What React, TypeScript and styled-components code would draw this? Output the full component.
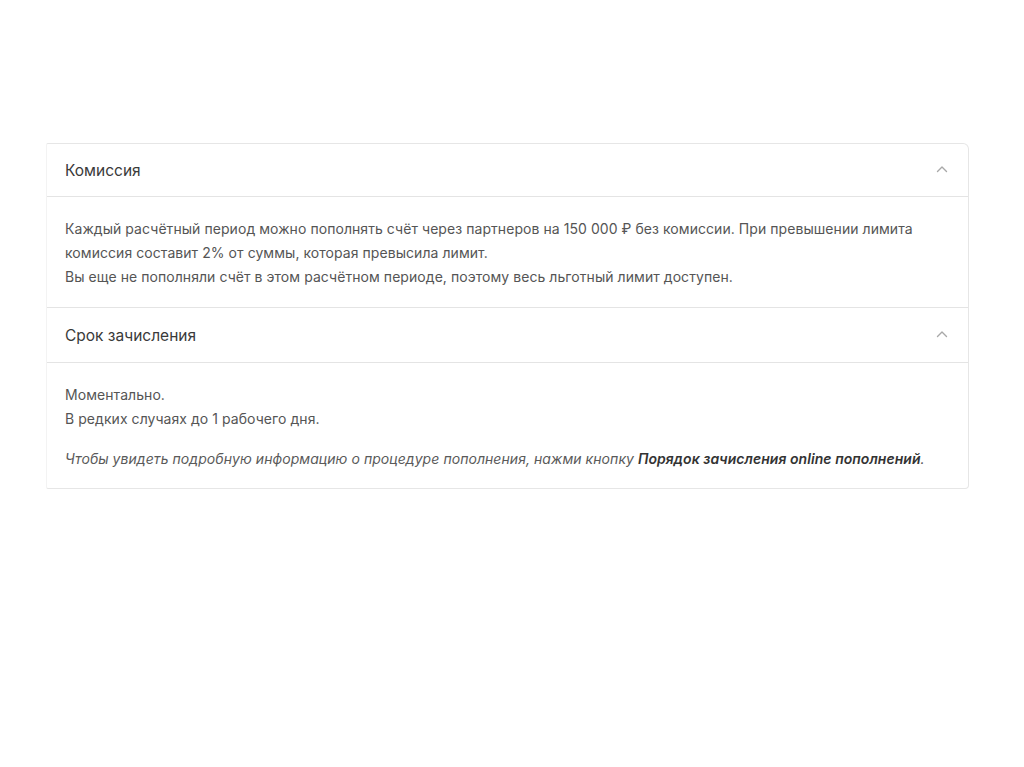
import styled, { createGlobalStyle } from "styled-components";

const GlobalStyle = createGlobalStyle`
  html, body {
    margin: 0;
    padding: 0;
    background: #fff;
  }
  body {
    font-family: Inter, "Noto Sans", "Liberation Sans", sans-serif;
    -webkit-font-smoothing: antialiased;
  }
`;

const Page = styled.div`
  width: 1024px;
  height: 767px;
  padding: 143px 0 0 46px;
  box-sizing: border-box;
  background: #fff;
`;

const Card = styled.div`
  width: 923px;
  box-sizing: border-box;
  border: 1px solid #e6e6e6;
  border-left-color: #f3f3f3;
  border-radius: 2px 6px 4px 2px;
  background: #fff;
`;

const Section = styled.div<{ $last?: boolean }>`
  border-bottom: ${(p) => (p.$last ? "none" : "1px solid #e4e4e4")};
`;

const Header = styled.div<{ $h: number }>`
  height: ${(p) => p.$h}px;
  display: flex;
  align-items: center;
  justify-content: space-between;
  padding: 0 18px;
  border-bottom: 1px solid #e4e4e4;
`;

const Title = styled.span`
  font-size: 15.5px;
  color: #3a3a3a;
`;

const Chevron = styled.svg`
  width: 12px;
  height: 8px;
  margin-right: 2px;
  margin-top: -3px;
`;

const Body = styled.div<{ $pt: number; $pb: number }>`
  padding: ${(p) => p.$pt}px 18px ${(p) => p.$pb}px;
`;

const Line = styled.p<{ $gap?: number }>`
  margin: ${(p) => p.$gap ?? 0}px 0 0;
  font-size: 14px;
  line-height: 24px;
  letter-spacing: 0.06px;
  color: #555;
`;

const Note = styled(Line)`
  font-style: italic;
  color: #5a5a5a;
`;

const Strong = styled.b`
  font-weight: 600;
  color: #333;
`;

const Caret = () => (
  <Chevron viewBox="0 0 12 8">
    <path d="M1.5 6.5 L6 2 L10.5 6.5" fill="none" stroke="#a8a8a8" strokeWidth="1.4" strokeLinecap="round" strokeLinejoin="round" />
  </Chevron>
);

export default function App() {
  return (
    <>
      <GlobalStyle />
      <Page>
        <Card>
          <Section>
            <Header $h={52}>
              <Title>Комиссия</Title>
              <Caret />
            </Header>
            <Body $pt={20} $pb={18}>
              <Line>
                Каждый расчётный период можно пополнять счёт через партнеров на 150 000 ₽ без комиссии. При превышении лимита
              </Line>
              <Line>комиссия составит 2% от суммы, которая превысила лимит.</Line>
              <Line>Вы еще не пополняли счёт в этом расчётном периоде, поэтому весь льготный лимит доступен.</Line>
            </Body>
          </Section>
          <Section $last>
            <Header $h={54}>
              <Title>Срок зачисления</Title>
              <Caret />
            </Header>
            <Body $pt={20} $pb={17}>
              <Line>Моментально.</Line>
              <Line>В редких случаях до 1 рабочего дня.</Line>
              <Note $gap={16}>
                Чтобы увидеть подробную информацию о процедуре пополнения, нажми кнопку{" "}
                <Strong>Порядок зачисления online пополнений</Strong>.
              </Note>
            </Body>
          </Section>
        </Card>
      </Page>
    </>
  );
}
